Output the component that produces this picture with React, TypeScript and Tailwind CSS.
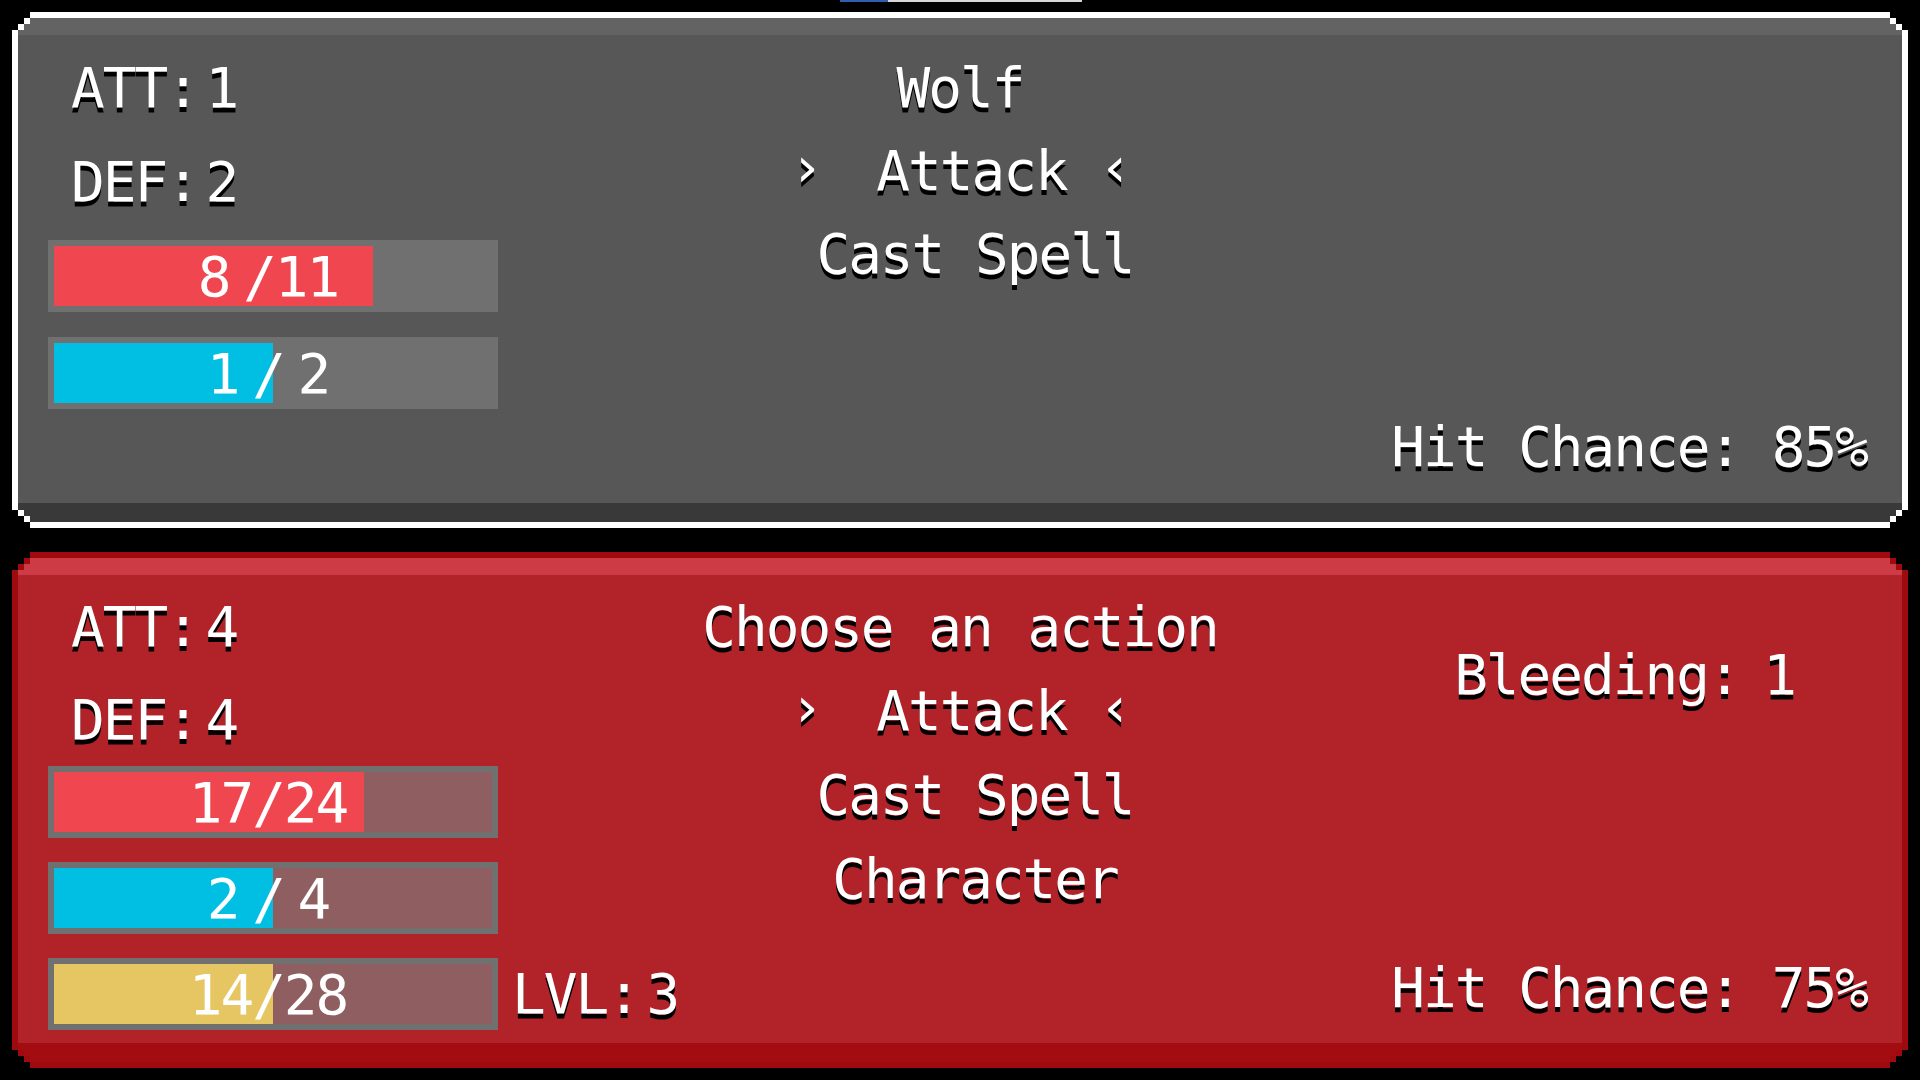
import React from 'react';

const txt =
  "font-['DejaVu_Sans_Mono','Liberation_Mono',monospace] text-[56px] leading-[56px] tracking-[-2px] text-white whitespace-pre [text-shadow:0_5px_0_#000]";

type Corner = 'tl' | 'tr' | 'bl' | 'br';

const cornerPos: Record<Corner, string> = {
  tl: 'left-[-6px] top-[-6px]',
  tr: 'right-[-6px] top-[-6px] -scale-x-100',
  bl: 'left-[-6px] bottom-[-6px] -scale-y-100',
  br: 'right-[-6px] bottom-[-6px] rotate-180',
};

// stepped pixel corner drawn over the panel border
const PixelCorner: React.FC<{ at: Corner; edge: string }> = ({ at, edge }) => (
  <svg className={`absolute ${cornerPos[at]}`} width="18" height="18" viewBox="0 0 18 18" shapeRendering="crispEdges">
    <rect x="0" y="0" width="18" height="6" fill="#000" />
    <rect x="0" y="6" width="12" height="6" fill="#000" />
    <rect x="0" y="12" width="6" height="6" fill="#000" />
    <rect x="12" y="6" width="6" height="6" fill={edge} />
    <rect x="6" y="12" width="6" height="6" fill={edge} />
  </svg>
);

interface BarProps {
  value: number;
  max: number;
  label: string;
  fill: string;
  track: string;
}

const Bar: React.FC<BarProps> = ({ value, max, label, fill, track }) => (
  <div className={`relative h-[72px] w-[450px] border-[6px] border-[#707070] ${track}`}>
    <div className={`h-full ${fill}`} style={{ width: `${(value / max) * 100}%` }} />
    <div className="absolute inset-0 flex items-center justify-center pr-[10px] pt-[2px]">
      <span className="font-['DejaVu_Sans_Mono','Liberation_Mono',monospace] text-[56px] leading-[56px] tracking-[-2px] text-white whitespace-pre [word-spacing:-18px]">
        {label}
      </span>
    </div>
  </div>
);

const Stat: React.FC<{ children: React.ReactNode; className?: string }> = ({ children, className = '' }) => (
  <div className={`${txt} ml-[23px] [word-spacing:-24px] ${className}`}>{children}</div>
);

const AttackLine = () => (
  <div className={`${txt} flex items-center`}>
    <span className="inline-block -translate-y-[4px]">›</span>
    <span className="ml-[55px]">Attack</span>
    <span className="ml-[32px] inline-block -translate-y-[4px]">‹</span>
  </div>
);

const Panel: React.FC<{
  edge: string;
  body: string;
  top: string;
  bottom: string;
  borderCls: string;
  className?: string;
  children: React.ReactNode;
}> = ({ edge, body, top, bottom, borderCls, className = '', children }) => (
  <div className={`relative mx-[12px] flex h-[516px] flex-col border-[6px] ${borderCls} ${body} ${className}`}>
    <div className={`h-[17px] ${top}`} />
    <div className="grid flex-1 grid-cols-[1fr_auto_1fr]">{children}</div>
    <div className={`h-[19px] ${bottom}`} />
    <PixelCorner at="tl" edge={edge} />
    <PixelCorner at="tr" edge={edge} />
    <PixelCorner at="bl" edge={edge} />
    <PixelCorner at="br" edge={edge} />
  </div>
);

export default function App() {
  return (
    <div className="h-[1080px] w-full overflow-hidden bg-black">
      {/* sliver of something above the frame */}
      <div className="flex h-[2px]">
        <div className="ml-[840px] w-[48px] bg-[#2c5fae]" />
        <div className="w-[194px] bg-[#d6d6d6]" />
      </div>

      {/* enemy panel */}
      <Panel
        edge="#ffffff"
        borderCls="border-white"
        body="bg-[#575757]"
        top="bg-[#636363]"
        bottom="bg-[#393939]"
        className="mt-[10px]"
      >
        <div className="flex flex-col pl-[30px] pt-[25px]">
          <Stat>ATT: 1</Stat>
          <Stat className="mt-[38px]">DEF: 2</Stat>
          <div className="mt-[30px]">
            <Bar value={8} max={11} label="8 /11" fill="bg-[#ef4650]" track="bg-[#707070]" />
          </div>
          <div className="mt-[25px]">
            <Bar value={1} max={2} label="1 / 2" fill="bg-[#00bfe3]" track="bg-[#707070]" />
          </div>
        </div>

        <div className="flex flex-col items-center gap-[27px] pt-[25px]">
          <div className={txt}>Wolf</div>
          <AttackLine />
          <div className={`${txt} pl-[30px]`}>Cast Spell</div>
        </div>

        <div className="flex flex-col items-end justify-end pb-[28px] pr-[35px]">
          <div className={txt}>Hit Chance: 85%</div>
        </div>
      </Panel>

      {/* player panel */}
      <Panel
        edge="#9e0a0e"
        borderCls="border-[#9e0a0e]"
        body="bg-[#b22229]"
        top="bg-[#cd3b44]"
        bottom="bg-[#a30c10]"
        className="mt-[24px]"
      >
        <div className="flex flex-col pl-[30px] pt-[24px]">
          <Stat>ATT: 4</Stat>
          <Stat className="mt-[37px]">DEF: 4</Stat>
          <div className="mt-[18px]">
            <Bar value={17} max={24} label="17/24" fill="bg-[#ef4650]" track="bg-[#8f5e60]" />
          </div>
          <div className="mt-[24px]">
            <Bar value={2} max={4} label="2 / 4" fill="bg-[#00bfe3]" track="bg-[#8f5e60]" />
          </div>
          <div className="mt-[24px] flex items-center gap-[14px]">
            <Bar value={14} max={28} label="14/28" fill="bg-[#e6c563]" track="bg-[#8f5e60]" />
            <div className={`${txt} [word-spacing:-24px]`}>LVL: 3</div>
          </div>
        </div>

        <div className="flex flex-col items-center gap-[28px] pt-[24px]">
          <div className={`${txt} [word-spacing:4px]`}>Choose an action</div>
          <AttackLine />
          <div className={`${txt} pl-[30px]`}>Cast Spell</div>
          <div className={`${txt} pl-[30px]`}>Character</div>
        </div>

        <div className="flex flex-col items-end pb-[27px] pr-[35px]">
          <div className={`${txt} mr-[72px] mt-[72px] [word-spacing:-8px]`}>Bleeding: 1</div>
          <div className={`${txt} mt-auto`}>Hit Chance: 75%</div>
        </div>
      </Panel>
    </div>
  );
}
